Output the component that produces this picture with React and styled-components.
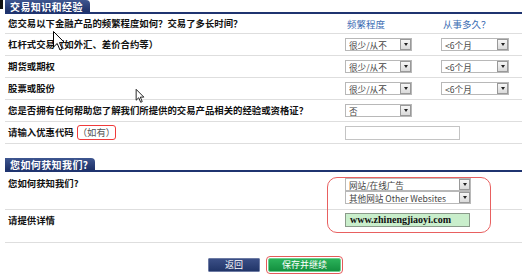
import React from 'react';
import styled, { createGlobalStyle } from 'styled-components';

const GlobalStyle = createGlobalStyle`
  html, body {
    margin: 0;
    padding: 0;
    background: #ffffff;
  }
  body {
    font-family: "Noto Sans CJK SC", "Liberation Sans", sans-serif;
    color: #111;
  }
`;

const Page = styled.div`
  position: relative;
  width: 522px;
  height: 277px;
  overflow: hidden;
  padding-left: 5px;
  box-sizing: border-box;
`;

const Corner = styled.div`
  position: absolute;
  left: 0;
  top: 0;
  width: 3px;
  height: 9px;
  background: #111;
`;

const Section = styled.div`
  margin-top: ${p => p.$top || 0}px;
`;

const TabBar = styled.div`
  display: flex;
  border-bottom: 2px solid #1f3470;
  height: 12px;
`;

const Tab = styled.div`
  height: 12px;
  padding: 0 7px 0 5px;
  background: linear-gradient(#3e5690, #1d3067);
  border-radius: 0 4px 0 0;
  color: #fff;
  font-weight: 700;
  font-size: 10px;
  line-height: 13px;
  letter-spacing: 0.4px;
  white-space: nowrap;
`;

const Row = styled.div`
  display: flex;
  align-items: ${p => (p.$top ? 'flex-start' : 'center')};
  height: ${p => p.$h || 21}px;
  border-bottom: 1px solid #dedede;
  box-sizing: content-box;
`;

const Label = styled.div`
  width: 340px;
  flex-shrink: 0;
  padding-left: 3px;
  padding-top: ${p => p.$pt || 0}px;
  box-sizing: border-box;
  font-weight: 700;
  font-size: 9.4px;
  line-height: 11px;
  white-space: nowrap;
  display: flex;
  align-items: center;
`;

const Note = styled.span`
  font-weight: 400;
  color: #555;
  margin-left: 3px;
  padding: 1px 0;
  border: 1px solid #f03a3a;
  border-radius: 3px;
`;

const Cell = styled.div`
  width: ${p => p.$w || 96}px;
  flex-shrink: 0;
  padding-top: ${p => p.$pt || 0}px;
  display: flex;
  flex-direction: column;
`;

const ColHead = styled.div`
  color: #3b6db3;
  font-size: 9.5px;
  padding-left: 2px;
`;

const SelectBox = styled.div`
  width: ${p => p.$w || 67}px;
  height: 13px;
  border: 1px solid #b8b8b8;
  box-sizing: border-box;
  display: flex;
  align-items: center;
  justify-content: space-between;
  background: #fff;
  font-size: 8.6px;
  color: #444;
  padding-left: 3px;
  overflow: hidden;
  white-space: nowrap;
`;

const SelectText = styled.span`
  overflow: hidden;
  flex: 1;
`;

const Arrow = styled.span`
  width: 11px;
  height: 11px;
  margin-right: 0;
  border: 1px solid #999;
  box-sizing: border-box;
  background: linear-gradient(#f6f6f6, #dadada);
  display: flex;
  align-items: center;
  justify-content: center;
  flex-shrink: 0;
  &::after {
    content: '';
    border-left: 2.5px solid transparent;
    border-right: 2.5px solid transparent;
    border-top: 3px solid #222;
  }
`;

const TextInput = styled.div`
  width: ${p => p.$w || 115}px;
  height: 14px;
  box-sizing: border-box;
  border: 1px solid ${p => (p.$green ? '#8a9a8a' : '#c4c4c4')};
  background: ${p => (p.$green ? '#c9eecb' : '#fff')};
  font-family: "Liberation Serif", serif;
  font-weight: 700;
  font-size: 10px;
  line-height: 12px;
  padding-left: 4px;
  color: #111;
`;

const Buttons = styled.div`
  display: flex;
  gap: 8px;
  padding-left: 203px;
  margin-top: 15px;
`;

const Button = styled.div`
  height: 14px;
  width: ${p => p.$w}px;
  box-sizing: border-box;
  background: ${p => (p.$green ? 'linear-gradient(#2bb25a, #13903f)' : 'linear-gradient(#3b4f86, #213568)')};
  border: 1px solid ${p => (p.$green ? '#6fcf8f' : '#6c7aa3')};
  color: #fff;
  font-size: 9px;
  line-height: 12px;
  text-align: center;
  outline: ${p => (p.$green ? '1px solid #e45a5a' : 'none')};
  outline-offset: 1px;
  border-radius: ${p => (p.$green ? '2px' : '1px')};
`;

const Mark = styled.div`
  position: absolute;
  left: 327px;
  top: 177px;
  width: 164px;
  height: 56px;
  border: 1px solid #e86060;
  border-radius: 10px;
  box-sizing: border-box;
  pointer-events: none;
`;

const Cursor = styled.svg`
  position: absolute;
  left: ${p => p.$x}px;
  top: ${p => p.$y}px;
  pointer-events: none;
`;

const Select = ({ w, children }) => (
  <SelectBox $w={w}>
    <SelectText>{children}</SelectText>
    <Arrow />
  </SelectBox>
);

const freq = ['杠杆式交易（如外汇、差价合约等）', '期货或期权', '股票或股份'];

export default function App() {
  return (
    <Page>
      <GlobalStyle />
      <Corner />
      <Section>
        <TabBar>
          <Tab>交易知识和经验</Tab>
        </TabBar>
        <Row $h={19}>
          <Label>您交易以下金融产品的频繁程度如何？交易了多长时间？</Label>
          <Cell><ColHead>频繁程度</ColHead></Cell>
          <Cell><ColHead>从事多久？</ColHead></Cell>
        </Row>
        {freq.map(f => (
          <Row key={f}>
            <Label>{f}</Label>
            <Cell><Select>很少/从不</Select></Cell>
            <Cell><Select w={68}>&lt;6个月</Select></Cell>
          </Row>
        ))}
        <Row>
          <Label>您是否拥有任何帮助您了解我们所提供的交易产品相关的经验或资格证？</Label>
          <Cell><Select>否</Select></Cell>
          <Cell />
        </Row>
        <Row>
          <Label>请输入优惠代码<Note>（如有）</Note></Label>
          <Cell $w={140}><TextInput /></Cell>
        </Row>
      </Section>

      <Section $top={14}>
        <TabBar>
          <Tab>您如何获知我们?</Tab>
        </TabBar>
        <Row $h={37} $top>
          <Label $pt={6}>您如何获知我们?</Label>
          <Cell $w={140} $pt={6}>
            <Select w={126}>网站/在线广告</Select>
            <Select w={126}>其他网站 Other Websites</Select>
          </Cell>
        </Row>
        <Row $h={32} $top>
          <Label $pt={5}>请提供详情</Label>
          <Cell $w={140} $pt={3}>
            <TextInput $w={125} $green>www.zhinengjiaoyi.com</TextInput>
          </Cell>
        </Row>
      </Section>

      <Buttons>
        <Button $w={52}>返回</Button>
        <Button $w={73} $green>保存并继续</Button>
      </Buttons>

      <Mark />

      <Cursor $x={53} $y={31} width="12" height="20" viewBox="0 0 12 20">
        <path d="M0.5 0.5 L0.5 16 L4.2 12.5 L7 19 L9.2 18 L6.5 11.6 L11.5 11.6 Z" fill="#fff" stroke="#000" strokeWidth="1" />
      </Cursor>
      <Cursor $x={135} $y={89} width="10" height="14" viewBox="0 0 12 20">
        <path d="M0.5 0.5 L0.5 16 L4.2 12.5 L7 19 L9.2 18 L6.5 11.6 L11.5 11.6 Z" fill="#fff" stroke="#000" strokeWidth="1.2" />
      </Cursor>
    </Page>
  );
}
